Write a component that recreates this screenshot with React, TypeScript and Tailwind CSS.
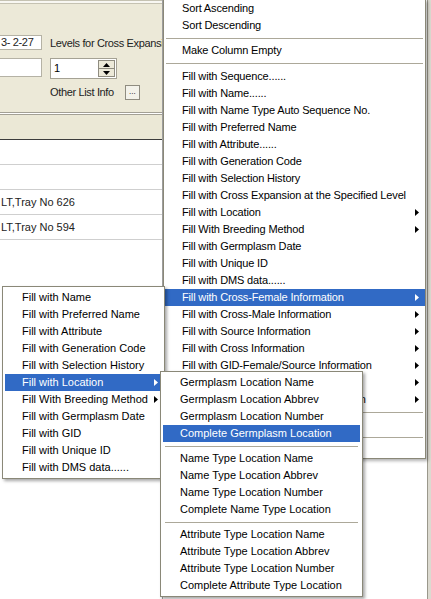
import React from "react";

const Arrow = ({ white }: { white?: boolean }) => (
  <svg width="4" height="7" viewBox="0 0 4 7" className="shrink-0">
    <path d="M0 0L4 3.5L0 7Z" fill={white ? "#ffffff" : "#000000"} />
  </svg>
);

type Item = { t: string; sub?: boolean; hi?: boolean } | "sep" | "sep9";

const MenuRows = ({ items, pl, pr }: { items: Item[]; pl: string; pr: string }) => (
  <>
    {items.map((it, i) => {
      if (it === "sep" || it === "sep9") {
        return (
          <div key={i} className={`${it === "sep9" ? "h-[9px]" : "h-[8px]"} flex items-center px-[2px]`}>
            <div className="h-px w-full bg-[#aca899]" />
          </div>
        );
      }
      return (
        <div
          key={i}
          className={`h-[17px] flex items-center justify-between whitespace-nowrap ${pl} ${pr} ${
            it.hi ? "bg-[#316ac5] text-white" : "text-black"
          }`}
        >
          <span>{it.t}</span>
          {it.sub ? <Arrow white={it.hi} /> : null}
        </div>
      );
    })}
  </>
);

const mainItems: Item[] = [
  { t: "Sort Ascending" },
  { t: "Sort Descending" },
  "sep",
  { t: "Make Column Empty" },
  "sep9",
  { t: "Fill with Sequence......" },
  { t: "Fill with Name......" },
  { t: "Fill with Name Type Auto Sequence No." },
  { t: "Fill with Preferred Name" },
  { t: "Fill with Attribute......" },
  { t: "Fill with Generation Code" },
  { t: "Fill with Selection History" },
  { t: "Fill with Cross Expansion at the Specified Level" },
  { t: "Fill with Location", sub: true },
  { t: "Fill With Breeding Method", sub: true },
  { t: "Fill with Germplasm Date" },
  { t: "Fill with Unique ID" },
  { t: "Fill with DMS data......" },
  { t: "Fill with Cross-Female Information", sub: true, hi: true },
  { t: "Fill with Cross-Male Information", sub: true },
  { t: "Fill with Source Information", sub: true },
  { t: "Fill with Cross Information", sub: true },
  { t: "Fill with GID-Female/Source Information", sub: true },
  { t: "Fill with GID Information", sub: true },
  { t: "Fill with GID-Female/Cross Information", sub: true },
  "sep",
  { t: "Fill with Default Value" },
  "sep",
  { t: "Copy Column" },
];

const leftItems: Item[] = [
  { t: "Fill with Name" },
  { t: "Fill with Preferred Name" },
  { t: "Fill with Attribute" },
  { t: "Fill with Generation Code" },
  { t: "Fill with Selection History" },
  { t: "Fill with Location", sub: true, hi: true },
  { t: "Fill With Breeding Method", sub: true },
  { t: "Fill with Germplasm Date" },
  { t: "Fill with GID" },
  { t: "Fill with Unique ID" },
  { t: "Fill with DMS data......" },
];

const locItems: Item[] = [
  { t: "Germplasm Location Name" },
  { t: "Germplasm Location Abbrev" },
  { t: "Germplasm Location  Number" },
  { t: "Complete Germplasm Location", hi: true },
  "sep",
  { t: "Name Type Location Name" },
  { t: "Name Type Location Abbrev" },
  { t: "Name Type Location Number" },
  { t: "Complete Name Type Location" },
  "sep",
  { t: "Attribute Type Location Name" },
  { t: "Attribute Type Location Abbrev" },
  { t: "Attribute Type Location Number" },
  { t: "Complete Attribute Type Location" },
];

export default function App() {
  return (
    <div className="relative w-[431px] h-[599px] overflow-hidden bg-white font-['Liberation_Sans',Arial,sans-serif] text-[11px] leading-none text-black [white-space:pre]">
      {/* background application */}
      <div className="flex h-full">
        <div className="w-[163px] shrink-0 flex flex-col border-r border-[#a0a0a0] overflow-hidden">
          <div className="h-[112px] bg-[#ece9d8] flex flex-col">
            <div className="h-[1px] bg-[#c5c2b2]" />
            <div className="h-[2px] bg-[#f8f7f2]" />
            <div className="h-[1px] bg-[#c5c2b2]" />
            <div className="flex flex-1 tracking-[-0.35px]">
              <div className="w-[42px] shrink-0 flex flex-col pt-[31px] gap-[8px]">
                <div className="h-[15px] bg-white border border-l-0 border-[#b5b2a5] flex items-center pl-[1px] text-[#222]">3- 2-27</div>
                <div className="h-[19px] bg-white border border-l-0 border-[#b5b2a5]" />
              </div>
              <div className="flex flex-col pl-[8px] pt-[33px]">
                <div className="h-[12px] flex items-center text-[#222] whitespace-nowrap">Levels for Cross Expansi</div>
                <div className="mt-[9px] w-[67px] h-[21px] bg-white border border-[#a5a294] flex items-center justify-between pl-[3px] pr-[1px]">
                  <span>1</span>
                  <div className="w-[17px] h-[17px] flex flex-col border border-[#8f8c80] bg-[#ece9d8]">
                    <div className="flex-1 flex items-center justify-center border-b border-[#8f8c80]">
                      <svg width="7" height="4" viewBox="0 0 7 4"><path d="M0 4L3.5 0L7 4Z" fill="#000" /></svg>
                    </div>
                    <div className="flex-1 flex items-center justify-center">
                      <svg width="7" height="4" viewBox="0 0 7 4"><path d="M0 0L3.5 4L7 0Z" fill="#000" /></svg>
                    </div>
                  </div>
                </div>
                <div className="mt-[6px] flex items-center">
                  <span className="text-[#222]">Other List Info</span>
                  <div className="ml-[11px] w-[15px] h-[15px] border border-[#8f8c80] bg-[#f3f2ea] flex items-center justify-center text-[8px] pb-[2px] tracking-normal">...</div>
                </div>
              </div>
            </div>
          </div>
          <div className="h-[1px] bg-[#a3a095]" />
          <div className="h-[1px] bg-white" />
          <div className="h-[1px] bg-[#a3a095]" />
          <div className="h-[25px] bg-[#ebe8d6] border-b border-[#3c3c3c]" />
          <div className="h-[25px] border-b border-[#cfcfcf]" />
          <div className="h-[25px] border-b border-[#cfcfcf]" />
          <div className="h-[25px] border-b border-[#cfcfcf] flex items-center pl-[1px] text-[#222]">LT,Tray No 626</div>
          <div className="h-[25px] border-b border-[#cfcfcf] flex items-center pl-[1px] text-[#222]">LT,Tray No 594</div>
          <div className="flex-1" />
        </div>
        <div className="flex-1 bg-white" />
        <div className="w-[4px] bg-[#dcdad0] border-l border-[#9a988c]" />
      </div>

      {/* main context menu */}
      <div className="absolute left-[163px] top-[-1px] w-[263px] bg-white border border-[#8a8878] shadow-[2px_2px_3px_rgba(0,0,0,0.3)] tracking-[-0.15px]">
        <MenuRows items={mainItems} pl="pl-[18px]" pr="pr-[6px]" />
      </div>

      {/* left popup menu */}
      <div className="absolute left-[2px] top-[286px] w-[163px] bg-white border border-[#8a8878] py-[2px] shadow-[2px_2px_3px_rgba(0,0,0,0.35)]">
        <div className="px-[2px]">
          <MenuRows items={leftItems} pl="pl-[17px]" pr="pr-[4px]" />
        </div>
      </div>

      {/* location submenu */}
      <div className="absolute left-[160px] top-[371px] w-[203px] bg-white border border-[#8a8878] py-[2px] shadow-[2px_2px_3px_rgba(0,0,0,0.35)]">
        <div className="px-[2px]">
          <MenuRows items={locItems} pl="pl-[17px]" pr="pr-[4px]" />
        </div>
      </div>
    </div>
  );
}
